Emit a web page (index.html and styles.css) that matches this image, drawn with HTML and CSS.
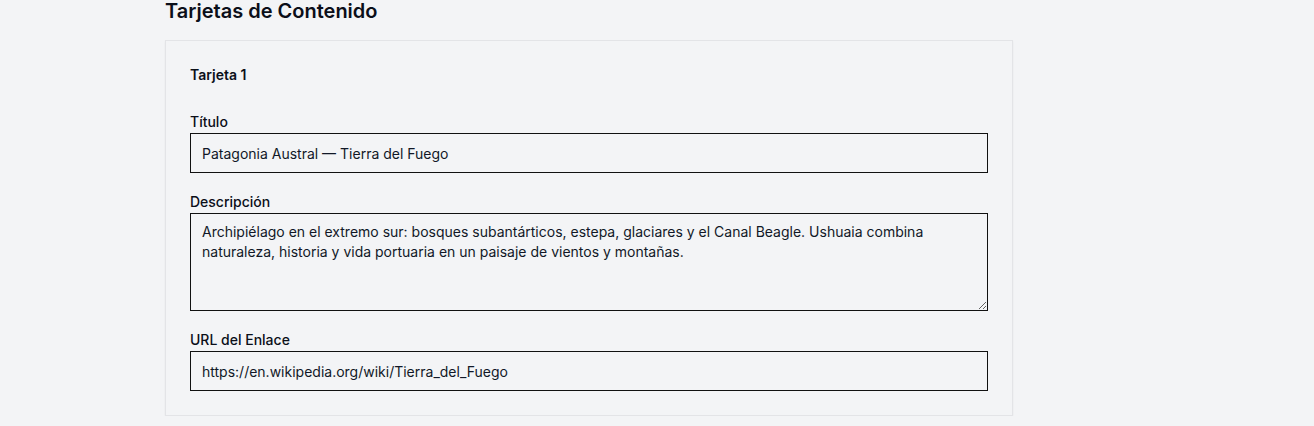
FILE: index.html
```html
<!DOCTYPE html>
<html lang="es">
<head>
<meta charset="utf-8">
<title>Tarjetas de Contenido</title>
<link rel="stylesheet" href="styles.css">
</head>
<body>
<main class="page">
  <h2 class="section-title">Tarjetas de Contenido</h2>
  <section class="card">
    <h3 class="card-title">Tarjeta 1</h3>
    <div class="fields">
      <div class="field">
        <label class="label" for="t1">Título</label>
        <input class="input" id="t1" type="text" value="Patagonia Austral — Tierra del Fuego">
      </div>
      <div class="field">
        <label class="label" for="d1">Descripción</label>
        <textarea class="input textarea" id="d1">Archipiélago en el extremo sur: bosques subantárticos, estepa, glaciares y el Canal Beagle. Ushuaia combina naturaleza, historia y vida portuaria en un paisaje de vientos y montañas.</textarea>
      </div>
      <div class="field">
        <label class="label" for="u1">URL del Enlace</label>
        <input class="input" id="u1" type="text" value="https://en.wikipedia.org/wiki/Tierra_del_Fuego">
      </div>
    </div>
  </section>
</main>
</body>
</html>
```

FILE: styles.css
```css
* { box-sizing: border-box; }
html, body {
  margin: 0;
  padding: 0;
  background: #f3f4f6;
}
body {
  font-family: Inter, "Noto Sans", "Liberation Sans", sans-serif;
  color: #111827;
}
.page {
  padding-left: 165px;
  margin-top: -3px;
}
.section-title {
  margin: 0 0 15px 0;
  font-size: 20px;
  line-height: 28px;
  font-weight: 600;
  color: #0b0f19;
}
.card {
  width: 848px;
  border: 1px solid #e3e4e7;
  background: #f3f4f6;
  padding: 24px 24px 24px 24px;
  box-shadow: 0 1px 2px rgba(0, 0, 0, 0.05);
}
.card-title {
  margin: 0 0 27px 0;
  font-size: 14px;
  line-height: 20px;
  font-weight: 600;
  color: #0b0f19;
}
.fields {
  display: flex;
  flex-direction: column;
  gap: 19px;
}
.field {
  display: flex;
  flex-direction: column;
}
.label {
  display: block;
  font-size: 14px;
  line-height: 20px;
  font-weight: 500;
  color: #0b0f19;
  margin-bottom: 1px;
}
.input {
  display: block;
  width: 100%;
  height: 40px;
  border: 1px solid #111;
  border-radius: 0;
  background: transparent;
  padding: 0 11px;
  font-family: Inter, "Noto Sans", "Liberation Sans", sans-serif;
  font-size: 14px;
  line-height: 20px;
  color: #111827;
  outline: none;
  margin: 0;
}
.textarea {
  height: 98px;
  padding: 8px 11px;
  resize: vertical;
}
```
